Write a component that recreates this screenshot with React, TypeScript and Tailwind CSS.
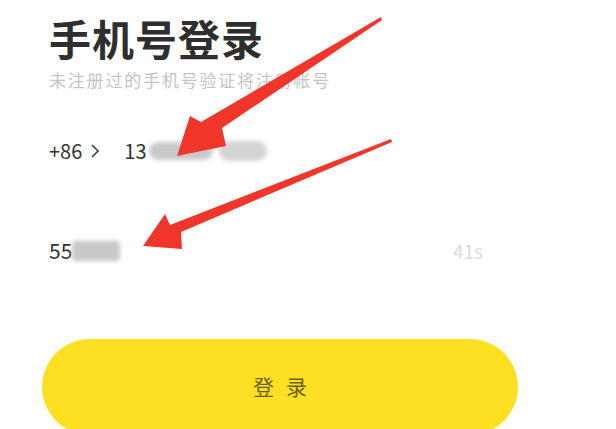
const font = { fontFamily: '"Noto Sans CJK SC", "Noto Sans", sans-serif' };

// Red annotation arrows drawn over the page
const Arrows: React.FC = () => (
  <svg
    className="absolute inset-0 pointer-events-none"
    width="616"
    height="429"
    viewBox="0 0 616 429"
  >
    {/* arrow 1: tail at top right, tip at phone number */}
    <polygon
      points="381,17 382,20 222,128 226,146 177,156 190,116 201,122"
      fill="#f0352b"
    />
    {/* arrow 2: tail at right, tip at code */}
    <polygon
      points="391,139 392,142 181,232 182,249 143,246 165,214 170,225"
      fill="#f0352b"
    />
  </svg>
);

export default function App() {
  return (
    <div className="relative w-[616px] h-[429px] overflow-hidden bg-white" style={font}>
      <div className="pl-[49px] pt-[13px]">
        <h1 className="text-[42px] leading-[50px] font-bold text-[#2e2e2e] tracking-[1px]">手机号登录</h1>
        <p className="mt-[7px] text-[17px] leading-[20px] text-[#c4c4c4] tracking-[1.8px]">未注册过的手机号验证将注册帐号</p>

        {/* phone row */}
        <div className="mt-[48px] flex items-center h-[26px] text-[20px] text-[#333]">
          <span>+86</span>
          <svg className="ml-[9px]" width="8" height="14" viewBox="0 0 8 14">
            <polyline points="1,1 7,7 1,13" fill="none" stroke="#444" strokeWidth="1.6" />
          </svg>
          <span className="ml-[25px]">13</span>
          <span className="ml-[2px] inline-block w-[64px] h-[18px] rounded-full bg-[#c9c9c9] blur-[2px]" />
          <span className="ml-[6px] inline-block w-[48px] h-[20px] rounded-full bg-[#d4d4d4] blur-[2px]" />
        </div>

        {/* code row */}
        <div className="mt-[74px] flex items-center h-[26px] text-[21px] text-[#333]">
          <span>55</span>
          <span className="inline-block w-[48px] h-[20px] rounded bg-[#c8c8c8] blur-[2px]" />
          <span className="ml-auto mr-[133px] text-[19px] text-[#dcdcdc]">41s</span>
        </div>
      </div>

      {/* login button */}
      <div className="mt-[75px] ml-[42px] w-[476px] h-[96px] rounded-full bg-[#fde024] flex items-center justify-center">
        <span className="text-[21px] text-[#6d5d17] tracking-[12px] pl-[12px]">登录</span>
      </div>

      <Arrows />
    </div>
  );
}
